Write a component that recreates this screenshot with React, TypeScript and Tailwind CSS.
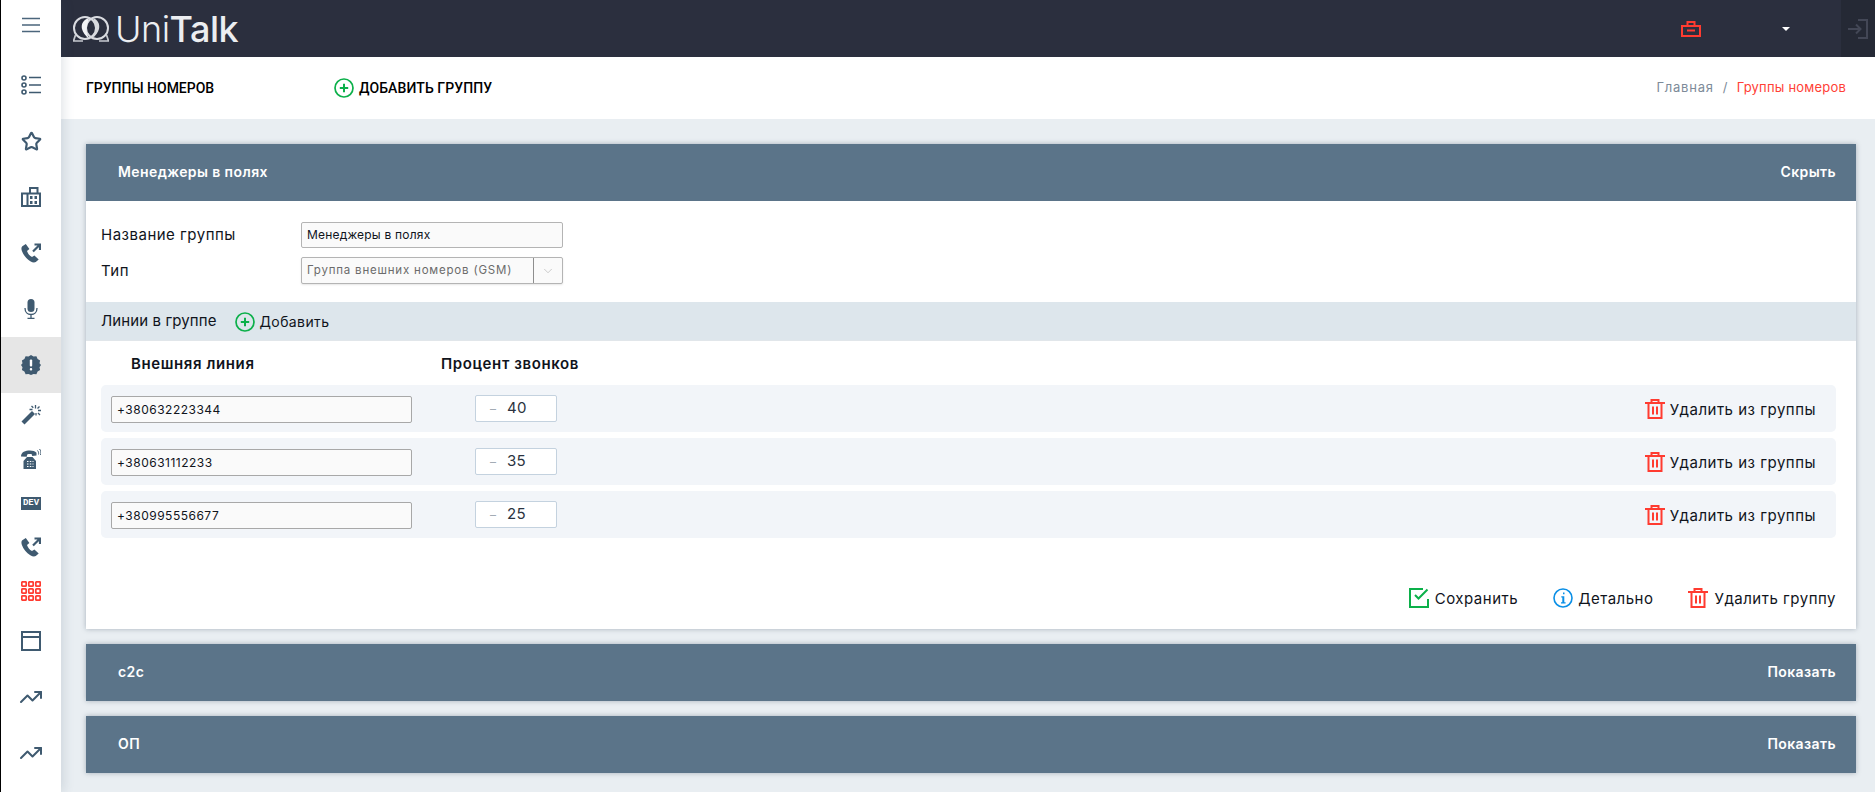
import { Star, TrendingUp, ChevronDown } from "lucide-react";
import type { ReactNode } from "react";

const SLATE = "#3f5a70";
const RED = "#ff3b30";
const GREEN = "#0cb04a";

function Glyph({ children, w = 20, h = 20, vb = "0 0 20 20" }: { children: ReactNode; w?: number; h?: number; vb?: string }) {
  return (
    <svg width={w} height={h} viewBox={vb} fill="none" className="shrink-0">
      {children}
    </svg>
  );
}

function BurgerIcon() {
  return (
    <Glyph>
      <path d="M1 3.500h18M1 10h18M1 16.500h18" stroke="#4b667c" strokeWidth="1.500" />
    </Glyph>
  );
}

function ListIcon() {
  return (
    <Glyph>
      <g stroke={SLATE} strokeWidth="1.600">
        <circle cx="3" cy="3" r="2" />
        <circle cx="3" cy="10" r="2" />
        <circle cx="3" cy="17" r="2" />
        <path d="M8 2.500h12M8 10h12M8 17.500h12" />
      </g>
    </Glyph>
  );
}

function BuildingIcon() {
  return (
    <Glyph>
      <path d="M1 6.500h5.500V19H1zM6.500 6.500h12.500V19H6.500zM9 6.500V1h7.500v5.500" stroke={SLATE} strokeWidth="2" />
      <path d="M9 9h2.500v3H9zM13.500 9H16v3h-2.500zM9 14h2.500v3H9zM13.500 14H16v3h-2.500z" fill={SLATE} />
    </Glyph>
  );
}

function PhoneArrowIcon() {
  return (
    <Glyph>
      <path
        d="M4.800 1 1.300 3.200C.2 4 .2 6 .9 8c1.400 4 4.600 8 8.400 10.300 2.200 1.300 4.200 1.500 5.500.7l2.900-2.600-4.300-4-2.400 1.700C8.500 12.800 6.800 10.300 6 8l2.400-2z"
        fill={SLATE}
      />
      <path d="M12 8.500 18 2.500M13.500 1.500H19V7" stroke={SLATE} strokeWidth="2.200" />
    </Glyph>
  );
}

function MicIcon() {
  return (
    <Glyph>
      <rect x="6.500" y="0" width="7" height="13" rx="3.500" fill={SLATE} />
      <path d="M4 9c0 4 2.500 6.500 6 6.500s6-2.500 6-6.500M10 15.500V19M6.500 19.300h7" stroke={SLATE} strokeWidth="1.300" />
    </Glyph>
  );
}

function AlertIcon() {
  return (
    <Glyph>
      <path
        d="M10 0l2.500 1.500 2.900-.3 1.200 2.700 2.500 1.500-.6 2.800L20 10l-1.500 2.200.6 2.800-2.500 1.500-1.200 2.700-2.900-.3L10 20l-2.500-1.100-2.900.3-1.200-2.700L.9 15l.6-2.800L0 10l1.500-1.800L.9 5.400l2.500-1.500 1.200-2.700 2.900.3z"
        fill={SLATE}
      />
      <rect x="8.800" y="4.500" width="2.400" height="7" rx="1" fill="#fff" />
      <rect x="8.800" y="13" width="2.400" height="2.400" rx="1" fill="#fff" />
    </Glyph>
  );
}

function WandIcon() {
  return (
    <Glyph>
      <path d="M0.500 16.500 11 6l3 3L3.500 19.500z" fill={SLATE} />
      <path d="M14.500 0v3.500M15 8v2.500M8.500 4.500h3M17 5.500h3M10.500 1l1.800 1.800M18.500 1.500l-2 2M19 10l-2-2" stroke={SLATE} strokeWidth="1.300" />
    </Glyph>
  );
}

function TelephoneIcon() {
  return (
    <Glyph>
      <path d="M0 7.500C0 3 4.500 1.500 9 1.500c2.800 0 5 .7 6.500 2.200V6.500l-4.200.6-.8-2c-1.500-.3-3-.2-4.300.3l-.5 2.400z" fill={SLATE} />
      <path d="M2.500 20v-8l3.500-4h5.500l3.500 4v8z" fill={SLATE} />
      <path d="M6 12.500h1.500M8.800 12.500h1.500M11.500 12.500h1M6 15h1.500M8.800 15h1.500M11.500 15h1M6 17.500h1.500M8.800 17.500h1.500M11.500 17.500h1" stroke="#fff" strokeWidth="1.100" />
      <path d="M16.500 1.500c1 1 1.300 2.500 1 4M18.500 0c1.500 1.500 1.800 4 1 6" stroke={SLATE} strokeWidth="1" />
    </Glyph>
  );
}

function DevIcon() {
  return (
    <span className="flex h-[13px] w-5 items-center justify-center bg-[#3f5a70] font-['Liberation_Mono',monospace] text-[9px] leading-none font-bold text-white">
      DEV
    </span>
  );
}

function GridIcon() {
  const cells = [1, 8, 15];
  return (
    <Glyph>
      {cells.map((y) =>
        cells.map((x) => <rect key={`${x}-${y}`} x={x - 0.2} y={y - 0.2} width="4.400" height="4.400" rx="0.800" stroke={RED} strokeWidth="1.700" />),
      )}
    </Glyph>
  );
}

function WindowIcon() {
  return (
    <Glyph>
      <path d="M1 1h18v18H1zM1 6h18" stroke={SLATE} strokeWidth="2" />
    </Glyph>
  );
}

function TrashIcon() {
  return (
    <Glyph>
      <path d="M0 4h20M6.500 4V1h7v3M3.500 4v15h13V4M8 7.500v8M12 7.500v8" stroke={RED} strokeWidth="2" />
    </Glyph>
  );
}

function PlusCircle() {
  return (
    <Glyph>
      <circle cx="10" cy="10" r="9" stroke={GREEN} strokeWidth="1.700" />
      <path d="M10 5.800v8.400M5.800 10h8.400" stroke={GREEN} strokeWidth="2" />
    </Glyph>
  );
}

function SaveIcon() {
  return (
    <Glyph>
      <path d="M14 1H1v18h18v-8" stroke={GREEN} strokeWidth="2" />
      <path d="M6 7l3.500 3.500L18.500 1.500" stroke={GREEN} strokeWidth="2" />
    </Glyph>
  );
}

function InfoIcon() {
  return (
    <Glyph>
      <circle cx="10" cy="10" r="9" stroke="#0a8fe6" strokeWidth="1.600" />
      <path d="M10 4.500h1.500V6.300H10zM8.300 8.300h3v6h1.300v1.300H8v-1.300h1.300V9.600h-1z" fill="#0a8fe6" />
    </Glyph>
  );
}

function LogoMark() {
  return (
    <svg width="36" height="28" viewBox="0 0 36 28" fill="none" className="shrink-0">
      <circle cx="12" cy="13" r="11" stroke="#d9dbe0" strokeWidth="2" />
      <circle cx="24" cy="13" r="11" stroke="#d9dbe0" strokeWidth="2" />
      <path d="M16 3c-6 2-8 6-7 11 .7 3 3 6 7 10-1-3-2.500-6-2.500-9 0-4 1.500-8 2.500-12z" fill="#f3f4f6" />
      <path d="M20 3c5 2 7 6 6 11-.7 3-3 6-7 10 1-3 3.500-6 3.500-9 0-4-1.500-8-2.500-12z" fill="#d8dade" />
      <path d="M0 26h10M26 26h10M2.500 20 .5 26M33.500 20l2 6" stroke="#c6c9cf" strokeWidth="1.700" />
    </svg>
  );
}

const RAIL = [
  { icon: <BurgerIcon />, h: "h-[57px] pb-[7px]" },
  { icon: <ListIcon />, h: "h-14" },
  { icon: <Star size={21} color={SLATE} strokeWidth={2.200} absoluteStrokeWidth />, h: "h-14" },
  { icon: <BuildingIcon />, h: "h-14" },
  { icon: <PhoneArrowIcon />, h: "h-14" },
  { icon: <MicIcon />, h: "h-14" },
  { icon: <AlertIcon />, h: "h-14", active: true },
  { icon: <WandIcon />, h: "h-11" },
  { icon: <TelephoneIcon />, h: "h-11" },
  { icon: <DevIcon />, h: "h-11" },
  { icon: <PhoneArrowIcon />, h: "h-11" },
  { icon: <GridIcon />, h: "h-11" },
  { icon: <WindowIcon />, h: "h-14" },
  { icon: <TrendingUp size={24} color={SLATE} strokeWidth={2} absoluteStrokeWidth />, h: "h-14" },
  { icon: <TrendingUp size={24} color={SLATE} strokeWidth={2} absoluteStrokeWidth />, h: "h-14" },
];

const LINES = [
  { phone: "+380632223344", percent: "40" },
  { phone: "+380631112233", percent: "35" },
  { phone: "+380995556677", percent: "25" },
];

function PanelHeader({ title, action }: { title: string; action: string }) {
  return (
    <div className="flex h-[57px] items-center justify-between bg-[#5b7489] pr-5 pb-px pl-8 text-sm font-semibold tracking-[0.4px] text-white">
      <span>{title}</span>
      <span>{action}</span>
    </div>
  );
}

function Action({ icon, label, gap = "gap-[6px]" }: { icon: ReactNode; label: string; gap?: string }) {
  return (
    <span className={`flex items-center ${gap} text-[15px] leading-5 tracking-[0.5px] text-[#10141c]`}>
      {icon}
      <span className="mt-[2px]">{label}</span>
    </span>
  );
}

export default function App() {
  return (
    <div className="flex h-[792px] w-[1875px] overflow-hidden bg-[#e9eef2] font-['Inter','Liberation_Sans',sans-serif]">
      <aside className="relative z-10 w-[61px] shrink-0 border-l border-l-black bg-white shadow-[3px_0_10px_rgba(60,80,100,0.14)]">
        {RAIL.map((item, i) => (
          <div key={i} className={`flex items-center justify-center ${item.h} ${item.active ? "bg-[#e6e6e6]" : ""}`}>
            {item.icon}
          </div>
        ))}
      </aside>

      <div className="flex min-w-0 flex-1 flex-col">
        <header className="flex h-[57px] shrink-0 items-center bg-[#2b2f3e]">
          <div className="ml-3 flex items-center gap-[6px]">
            <LogoMark />
            <span className="text-4xl leading-none font-light tracking-[-0.5px] text-[#eceef1]">
              Uni<span className="font-medium">Talk</span>
            </span>
          </div>
          <div className="ml-auto flex h-full items-center">
            <Glyph h={16} vb="0 0 20 16">
              <path d="M1 5h18v10H1zM6.500 5V1h7v4M6 9.500h8" stroke={RED} strokeWidth="2" />
            </Glyph>
            <span className="ml-[81px] h-0 w-0 border-x-[4px] border-t-[4px] border-x-transparent border-t-white" />
            <div className="ml-[51px] flex h-full w-[34px] items-center justify-center bg-[#252935]">
              <Glyph>
                <path d="M10 1h9v18h-9M0 10h12M8 5.500l4.500 4.500L8 14.500" stroke="#434756" strokeWidth="2" />
              </Glyph>
            </div>
          </div>
        </header>

        <div className="flex h-[62px] shrink-0 items-center bg-white pr-[29px] pl-[25px]">
          <h1 className="w-[248px] font-['Roboto',sans-serif] text-sm font-medium text-black">ГРУППЫ НОМЕРОВ</h1>
          <span className="flex items-center gap-[5px] font-['Roboto',sans-serif] text-sm font-medium tracking-[0.1px] text-black">
            <PlusCircle />
            ДОБАВИТЬ ГРУППУ
          </span>
          <span className="ml-auto text-[13px] tracking-[0.2px] text-[#7d8b99]">
            <span className="tracking-[0.8px]">Главная</span>
            <span className="mx-[9px]">/</span>
            <span className="text-[#ff4136]">Группы номеров</span>
          </span>
        </div>

        <main className="flex flex-col gap-[15px] pt-[25px] pr-[19px] pl-[25px]">
          <section className="bg-white shadow-[0_0_5px_rgba(40,60,80,0.35)]">
            <PanelHeader title="Менеджеры в полях" action="Скрыть" />

            <div className="flex flex-col gap-[9px] px-[15px] pt-[21px] pb-[18px] text-[#10141c]">
              <div className="flex items-center">
                <span className="w-[200px] text-[15px] tracking-[0.5px]">Название группы</span>
                <div className="flex h-[26px] w-[262px] items-center rounded-[2px] border border-[#b4b4b4] bg-[#fafafa] px-[5px] text-xs tracking-[0.2px]">
                  Менеджеры в полях
                </div>
              </div>
              <div className="flex items-center">
                <span className="w-[200px] pt-px text-[15px] tracking-[0.5px]">Тип</span>
                <div className="flex h-[27px] w-[262px] items-center rounded-[2px] border border-[#b4b4b4] bg-[#fafafa] text-[11.500px] tracking-[0.8px] text-[#6b6b6b] shadow-[0_1px_2px_rgba(0,0,0,0.1)]">
                  <span className="flex-1 px-[5px] pt-px">Группа внешних номеров (GSM)</span>
                  <span className="flex h-full w-[29px] items-center justify-center border-l border-[#8e8e8e]">
                    <ChevronDown size={14} color="#a8a8a8" strokeWidth={1} />
                  </span>
                </div>
              </div>
            </div>

            <div className="flex h-[39px] items-center border-b border-[#e1e6ea] bg-[#dde6ec] px-[15px] pt-px text-[15px] tracking-[0.1px] text-[#10141c]">
              <span>Линии в группе</span>
              <span className="ml-[18px] flex items-center gap-[5px] text-sm tracking-[0.4px]">
                <PlusCircle />
                Добавить
              </span>
            </div>

            <div className="flex h-11 items-center px-[15px] pt-[3px] text-[15px] font-semibold tracking-[0.6px] text-[#10141c]">
              <span className="ml-[30px] w-[310px]">Внешняя линия</span>
              <span>Процент звонков</span>
            </div>

            <div className="flex flex-col gap-[6px] pr-5 pl-[15px]">
              {LINES.map((line) => (
                <div key={line.phone} className="flex h-[47px] items-center rounded-[5px] bg-[#f2f5f9] pr-5 pl-[10px]">
                  <div className="mt-[2px] flex h-[27px] w-[301px] items-center rounded-[2px] border border-[#a8a8a8] bg-[#fafafa] px-[5px] text-xs tracking-[0.5px] text-[#10141c]">
                    {line.phone}
                  </div>
                  <div className="ml-[63px] flex h-[27px] w-[82px] items-center rounded-[2px] border border-[#c4d2df] bg-white pl-[14px] text-[15px] tracking-[0.3px] text-[#2b3340]">
                    <span className="w-[17px] text-xs text-[#a3acb5]">–</span>
                    {line.percent}
                  </div>
                  <span className="ml-auto">
                    <Action icon={<TrashIcon />} label="Удалить из группы" gap="gap-[5px]" />
                  </span>
                </div>
              ))}
            </div>

            <div className="flex items-center justify-end gap-[35px] pt-[49px] pr-5 pb-5">
              <Action icon={<SaveIcon />} label="Сохранить" />
              <Action icon={<InfoIcon />} label="Детально" gap="gap-[5px]" />
              <Action icon={<TrashIcon />} label="Удалить группу" />
            </div>
          </section>

          <section className="shadow-[0_0_5px_rgba(40,60,80,0.35)]">
            <PanelHeader title="c2c" action="Показать" />
          </section>
          <section className="shadow-[0_0_5px_rgba(40,60,80,0.35)]">
            <PanelHeader title="ОП" action="Показать" />
          </section>
        </main>
      </div>
    </div>
  );
}
